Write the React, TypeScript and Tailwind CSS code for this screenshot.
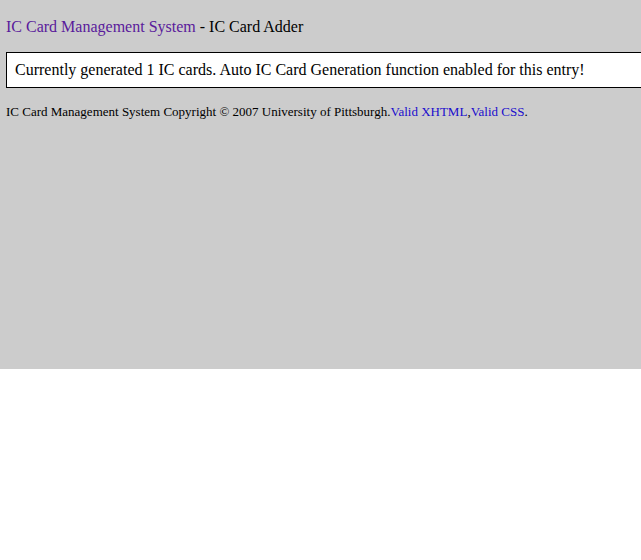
export default function App() {
  return (
    <div className="h-[369px] overflow-hidden bg-[#cccccc] px-[6px] pt-[17px] font-['Liberation_Serif',serif] text-black">
      <h1 className="text-[16px] leading-[19px] font-normal">
        <a href="#" className="text-[#5a1a9b]">IC Card Management System</a> - IC Card Adder
      </h1>
      <div className="mt-[16px] w-[700px] border border-black bg-white px-[8px] py-[7px] text-[16px] leading-[20px]">
        Currently generated 1 IC cards. Auto IC Card Generation function enabled for this entry!
      </div>
      <p className="mt-[16px] text-[13px] leading-[16px]">
        IC Card Management System Copyright © 2007 University of Pittsburgh.
        <a href="#" className="text-[#1a0dcc]">Valid XHTML</a>,
        <a href="#" className="text-[#1a0dcc]">Valid CSS</a>.
      </p>
    </div>
  );
}
